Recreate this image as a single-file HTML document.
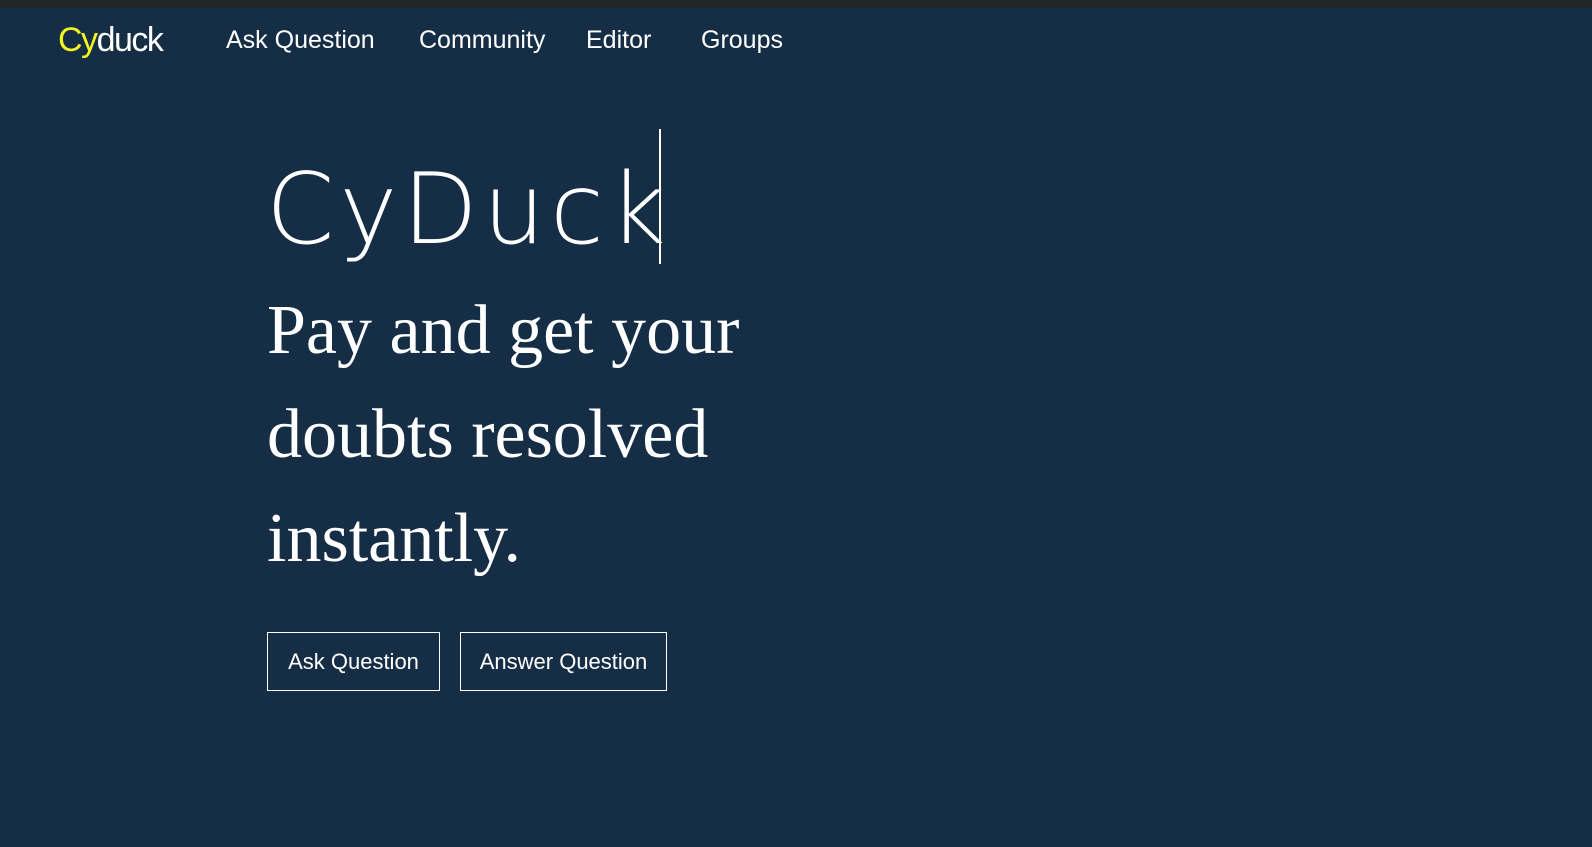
<!DOCTYPE html>
<html><head><style>
*{margin:0;padding:0;box-sizing:border-box}
body{width:1592px;height:847px;background:#152e45;overflow:hidden;position:relative;font-family:"Liberation Sans Narrow","Liberation Sans",sans-serif;color:#fff}
.top{position:absolute;left:0;top:0;width:1592px;height:8px;background:#232427}
.nav{position:absolute;top:26px;font-size:25px;white-space:nowrap}
.logo{left:58px;top:21px;font-size:34px;font-family:"Liberation Sans",sans-serif;letter-spacing:-1.5px}
.logo span{color:#f5f520}
.h1{position:absolute;left:266px;top:155px;font-family:"DejaVu Sans","Liberation Sans",sans-serif;font-weight:200;font-size:98px;letter-spacing:5px;line-height:110px}
.cur{position:absolute;left:659px;top:129px;width:2px;height:135px;background:#fff}
.sub{position:absolute;left:267px;top:279px;font-family:"Liberation Serif",serif;font-size:70px;line-height:104px}
.btn{position:absolute;top:632px;height:59px;border:1px solid #fff;font-size:22px;line-height:57px;text-align:center}
</style></head><body>
<div class="top"></div>
<div class="nav logo"><span>Cy</span>duck</div>
<div class="nav" style="left:226px">Ask Question</div>
<div class="nav" style="left:419px">Community</div>
<div class="nav" style="left:586px">Editor</div>
<div class="nav" style="left:701px">Groups</div>
<div class="h1">CyDuck</div>
<div class="cur"></div>
<div class="sub">Pay and get your<br>doubts resolved<br>instantly.</div>
<div class="btn" style="left:267px;width:173px">Ask Question</div>
<div class="btn" style="left:460px;width:207px">Answer Question</div>
</body></html>
